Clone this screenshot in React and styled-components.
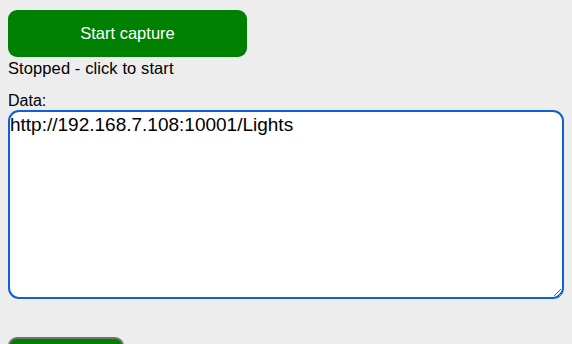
import React, { useEffect, useRef } from 'react'
import styled, { createGlobalStyle } from 'styled-components'

const GlobalStyle = createGlobalStyle`
  html, body {
    margin: 0;
    padding: 0;
    background-color: #ededed;
    font-family: "Liberation Sans", Arial, sans-serif;
    color: #000;
  }
`

const Page = styled.main`
  display: flex;
  flex-direction: column;
  align-items: flex-start;
  padding: 10px 8px;
  height: 344px;
  box-sizing: border-box;
  overflow: hidden;
`

const CaptureButton = styled.button`
  display: block;
  width: ${(p) => p.$width}px;
  height: 47px;
  flex-shrink: 0;
  margin-top: ${(p) => p.$offset || 0}px;
  padding: 0;
  border: ${(p) => (p.$outlined ? '2px solid #727272' : 'none')};
  border-radius: 9px;
  background-color: #008000;
  color: #fff;
  font-family: "Liberation Sans", Arial, sans-serif;
  font-size: 16.5px;
  cursor: pointer;
  box-sizing: border-box;
`

const Status = styled.p`
  margin: 0;
  font-size: 16.5px;
  line-height: 22px;
  letter-spacing: 0.1px;
`

const Label = styled.label`
  display: block;
  margin-top: 12px;
  font-size: 16px;
  line-height: 19px;
`

const DataBox = styled.textarea`
  display: block;
  width: 556px;
  height: 189px;
  margin: 0;
  padding: 1px 0 0 0;
  box-sizing: border-box;
  border: 2px solid #0a62d6;
  border-radius: 11px;
  background-color: #fff;
  outline: none;
  font-family: "Liberation Sans", Arial, sans-serif;
  font-size: 19px;
  line-height: 23px;
  color: #000;
  caret-color: #000;
  resize: both;
  flex-shrink: 0;
`

const App = () => {
  const ref = useRef(null)

  useEffect(() => {
    const el = ref.current
    if (el) {
      el.focus()
      el.setSelectionRange(el.value.length, el.value.length)
    }
  }, [])

  return (
    <Page>
      <GlobalStyle />
      <CaptureButton $width={239}>Start capture</CaptureButton>
      <Status>Stopped - click to start</Status>
      <Label htmlFor="data">Data:</Label>
      <DataBox
        id="data"
        ref={ref}
        spellCheck={false}
        defaultValue="http://192.168.7.108:10001/Lights"
      />
      <CaptureButton $width={116} $outlined $offset={38} aria-label="Send" />
    </Page>
  )
}

export default App
